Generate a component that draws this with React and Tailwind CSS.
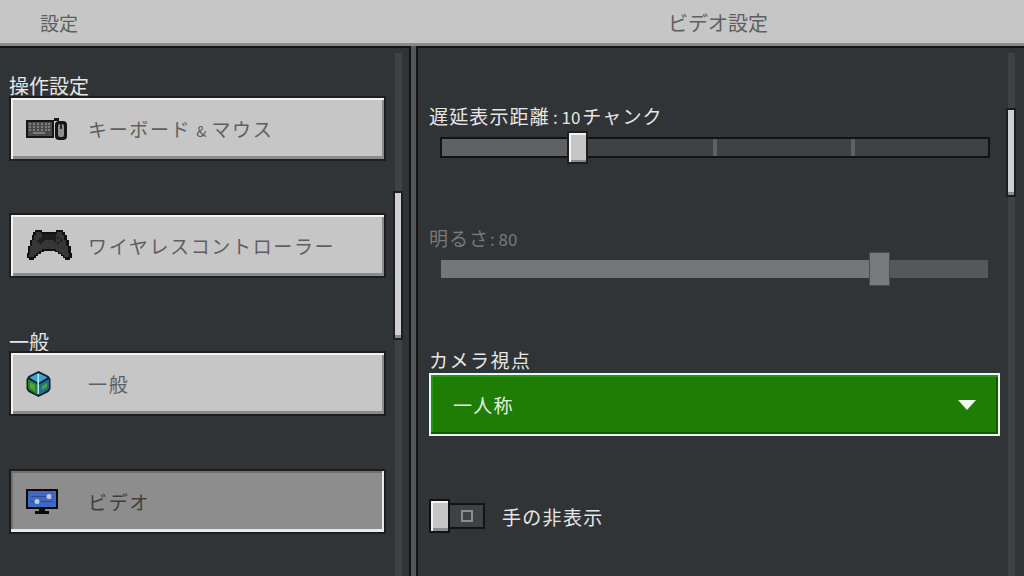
const FONT = "font-['Noto_Sans_CJK_JP','Noto_Sans',sans-serif]"

function KeyboardIcon() {
  return (
    <svg width="42" height="22" viewBox="0 0 42 22" className="shrink-0">
      <rect x="0" y="2" width="28" height="18" fill="#161616" />
      <rect x="2" y="4" width="24" height="14" fill="#4a4a4a" />
      <g fill="#7c7c7c">
        {[3, 7, 11, 15, 19, 22].map(x => (
          <g key={x}>
            <rect x={x} y="5" width="2" height="2" />
            <rect x={x} y="8" width="2" height="2" />
            <rect x={x} y="11" width="2" height="2" />
          </g>
        ))}
        <rect x="7" y="14" width="12" height="2" />
      </g>
      <rect x="28" y="0" width="5" height="3" fill="#161616" />
      <rect x="29" y="3" width="12" height="19" rx="4" fill="#161616" />
      <rect x="32" y="6" width="6" height="13" rx="2" fill="#8e8e8e" />
      <rect x="34" y="6" width="2" height="5" fill="#2a2a2a" />
    </svg>
  )
}

function ControllerIcon() {
  return (
    <svg width="46" height="33" viewBox="0 0 46 33" className="shrink-0">
      <path
        d="M9 1h7v2h14V1h7v2h2v3h2v5h2v6h2v7h1v5h-2v2h-5v-2h-2v-2h-2v-2h-3v-2h-3v-1H18v1h-3v2h-3v2h-2v2H8v2H3v-2H1v-5h1v-7h2v-6h2V6h1V3h2z"
        fill="#111"
      />
      <path
        d="M10 3h5v2h16V3h5v3h2v5h2v6h2v7h1v4h-5v-2h-2v-2h-3v-2h-3v-2H16v2h-3v2h-3v2H8v2H3v-4h1v-7h2v-6h2V6h2z"
        fill="#363636"
      />
      <rect x="16" y="5" width="14" height="6" fill="#1c1c1c" />
      <path d="M11 11h2V9h3v2h2v2h-2v2h-3v-2h-2z" fill="#1e1e1e" />
      <rect x="31" y="8" width="2" height="2" fill="#1c1c1c" />
      <rect x="31" y="13" width="2" height="2" fill="#1c1c1c" />
      <rect x="28" y="10" width="2" height="3" fill="#1c1c1c" />
      <rect x="34" y="10" width="2" height="3" fill="#1c1c1c" />
    </svg>
  )
}

function CubeIcon() {
  return (
    <svg width="25" height="26" viewBox="0 0 25 26" className="shrink-0">
      <path d="M12.5 0l4 2 6 3 2 3v10l-2 3-6 3-4 2-4-2-6-3-2-3V8l2-3 6-3z" fill="#10202e" />
      <path d="M12.5 2l9 4.500-9 5.500-9-5.500z" fill="#3aa6d6" />
      <path d="M2 8l10 5.500V24L3 19l-1-2z" fill="#2a8038" />
      <path d="M23 8l-10 5.500V24l9-5 1-2z" fill="#1c6f92" />
      <path d="M4 11l5 3v6l-5-3zM16 15l5-3v4l-5 3z" fill="#4aa63e" />
      <rect x="11.500" y="3" width="1.500" height="20" fill="#bfe3f0" />
    </svg>
  )
}

function MonitorIcon() {
  return (
    <svg width="32" height="25" viewBox="0 0 32 25" className="shrink-0">
      <rect x="0" y="0" width="32" height="20" fill="#0a0a0a" />
      <rect x="2" y="2" width="28" height="16" fill="#3f67c4" />
      <rect x="5" y="7" width="22" height="1" fill="#2b4a90" />
      <rect x="5" y="12" width="22" height="1" fill="#2b4a90" />
      <circle cx="23" cy="7.500" r="2.500" fill="#c4c8d2" />
      <circle cx="11" cy="12.500" r="2.500" fill="#c4c8d2" />
      <rect x="13" y="20" width="6" height="2" fill="#0a0a0a" />
      <rect x="9" y="22" width="14" height="3" fill="#0a0a0a" />
    </svg>
  )
}

function NavButton({ icon, label, active }) {
  return (
    <div
      className={
        'relative h-[65px] w-[377px] shrink-0 border-2 border-[#1e1e1f] flex items-center pl-[15px] ' +
        (active
          ? 'bg-[#8d8d8d] shadow-[inset_0_-3px_0_#e8e8e8,inset_-2px_0_0_#e8e8e8,inset_2px_0_0_#6f6f6f,inset_0_2px_0_#6f6f6f]'
          : 'bg-[#c6c6c6] shadow-[inset_0_2px_0_#f2f2f2,inset_2px_0_0_#f2f2f2,inset_0_-3px_0_#8b8b8b,inset_-2px_0_0_#8b8b8b]')
      }
    >
      <div className="w-[62px] shrink-0">{icon}</div>
      <span className={'text-[19px] tracking-[1.65px] leading-none ' + (active ? 'text-[#3e3e3e]' : 'text-[#5f5f5f]')}>{label}</span>
    </div>
  )
}

function SectionLabel({ children, className }) {
  return <div className={'text-[20px] leading-[20px] text-[#e6e6e6] ' + className}>{children}</div>
}

function Scrollbar({ thumbTop, thumbHeight, className }) {
  return (
    <div className={'shrink-0 w-[10px] mt-[5px] h-[524px] flex justify-center relative ' + className}>
      <div className="w-[7px] h-full bg-[#3f4143]" />
      <div
        className="absolute left-0 w-[10px] bg-[#d0d0d2] border-2 border-[#1e1e1f] shadow-[inset_0_-3px_0_#8b8b8b]"
        style={{ top: thumbTop, height: thumbHeight }}
      />
    </div>
  )
}

export default function App() {
  return (
    <div className={'w-[1024px] h-[576px] overflow-hidden flex flex-col bg-[#555657] ' + FONT}>
      {/* Header */}
      <header className="h-[46px] shrink-0 flex bg-[#c6c6c6] border-b-[3px] border-[#8a8a8a] text-[#5f5f5f] leading-none">
        <div className="w-[416px] pl-[40px] pt-[13px] text-[19px]">設定</div>
        <div className="flex-1 pt-[13px] text-center pr-[4px] text-[20px]">ビデオ設定</div>
      </header>

      <div className="flex-1 min-h-0 flex gap-[5px]">
        {/* Left panel */}
        <aside className="w-[411px] shrink-0 flex bg-[#313436] border-t-2 border-r-2 border-[#131313]">
          <div className="w-[393px] shrink-0 pl-[9px] flex flex-col">
            <SectionLabel className="mt-[28px] h-[20px]">操作設定</SectionLabel>
            <NavButton icon={<KeyboardIcon />} label={<>キーボード<span className="text-[15px] tracking-normal mx-[5px]">&amp;</span>マウス</>} />
            <div className="mt-[52px]">
              <NavButton icon={<ControllerIcon />} label="ワイヤレスコントローラー" />
            </div>
            <SectionLabel className="mt-[54px] h-[19px]">一般</SectionLabel>
            <NavButton icon={<CubeIcon />} label="一般" />
            <div className="mt-[53px]">
              <NavButton icon={<MonitorIcon />} label="ビデオ" active />
            </div>
          </div>
          <Scrollbar thumbTop={138} thumbHeight={149} />
        </aside>

        {/* Right panel */}
        <main className="flex-1 min-w-0 flex bg-[#313436] border-t-2 border-l-2 border-[#131313]">
          <div className="w-[588px] shrink-0 pl-[11px] flex flex-col">
            <div className="mt-[56px] h-[24px] flex items-baseline text-[#e6e6e6] text-[19px] leading-[24px] tracking-[1.15px]">
              遅延表示距離<span className="text-[17px] tracking-normal ml-[3px] mr-[2px]">: 10</span>チャンク
            </div>

            {/* Render distance slider */}
            <div className="mt-[9px] ml-[11px] w-[550px] h-[21px] border-2 border-[#131313] bg-[#3f4143] flex items-center relative">
              <div className="w-[125px] h-full bg-[#5f6163]" />
              <div className="absolute left-[271px] top-0 w-[4px] h-full bg-[#5f6163]" />
              <div className="absolute left-[409px] top-0 w-[4px] h-full bg-[#5f6163]" />
              <div className="absolute left-[125px] top-[-8px] w-[21px] h-[33px] bg-[#c6c6c6] border-2 border-[#1e1e1f] shadow-[inset_0_2px_0_#f2f2f2,inset_2px_0_0_#f2f2f2,inset_0_-2px_0_#8b8b8b]" />
            </div>

            <div className="mt-[68px] h-[24px] flex items-baseline text-[#77797b] text-[19px] leading-[24px] tracking-[1px]">
              明るさ<span className="text-[17px] tracking-normal ml-[1px]">: 80</span>
            </div>

            {/* Brightness slider, disabled */}
            <div className="mt-[10px] ml-[12px] w-[547px] h-[18px] bg-[#55575a] relative">
              <div className="w-[428px] h-full bg-[#747678]" />
              <div className="absolute left-[428px] top-[-8px] w-[21px] h-[34px] bg-[#77797b] border border-[#4a4c4e]" />
            </div>

            <div className="mt-[70px] text-[19px] leading-[24px] tracking-[1.5px] text-[#e6e6e6]">カメラ視点</div>

            {/* Dropdown */}
            <div className="mt-[1px] w-[571px] h-[63px] border-2 border-[#f0f4ee] bg-[#1f7d05] shadow-[inset_0_2px_0_#1c9a08,inset_0_-2px_0_#105a02,inset_-2px_0_0_#105a02,inset_2px_0_0_#1c9a08] flex items-center justify-between pl-[22px] pr-[22px]">
              <span className="text-[#e4f0dd] text-[19px] leading-none tracking-[1.2px]">一人称</span>
              <svg width="18" height="10" viewBox="0 0 18 10">
                <path d="M0 0h18L9 10z" fill="#f4f6f2" />
              </svg>
            </div>

            {/* Toggle */}
            <div className="mt-[63px] flex items-center">
              <div className="relative w-[56px] h-[34px] shrink-0 flex items-center">
                <div className="absolute left-[18px] top-[4px] w-[38px] h-[26px] bg-[#3f4143] border-2 border-[#131313] flex items-center justify-center">
                  <div className="w-[12px] h-[12px] ml-[2px] border-2 border-[#8a8c8e]" />
                </div>
                <div className="absolute left-0 top-0 w-[21px] h-[34px] bg-[#c6c6c6] border-2 border-[#131313] shadow-[inset_0_2px_0_#f2f2f2,inset_2px_0_0_#f2f2f2,inset_0_-3px_0_#8b8b8b]" />
              </div>
              <span className="ml-[17px] text-[#e6e6e6] text-[19px] leading-none tracking-[1.3px]">手の非表示</span>
            </div>
          </div>
          <Scrollbar thumbTop={55} thumbHeight={89} />
        </main>
      </div>
    </div>
  )
}
